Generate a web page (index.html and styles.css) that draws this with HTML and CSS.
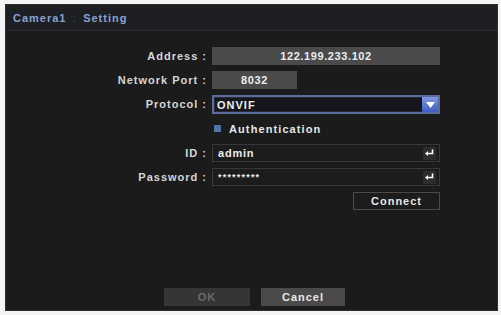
FILE: index.html
```html
<!DOCTYPE html>
<html lang="en">
<head>
    <meta charset="UTF-8">
    <title>Camera1 Setting</title>
    <link rel="stylesheet" href="styles.css">
</head>
<body>
<div class="window">
    <div class="titlebar">
        <span>Camera1</span>
        <span class="sep">:</span>
        <span>Setting</span>
    </div>

    <form class="setting-form">
        <label>Address :</label>
        <div class="field filled center">122.199.233.102</div>

        <label>Network Port :</label>
        <div class="field filled center short">8032</div>

        <label>Protocol :</label>
        <div class="field select">
            <span>ONVIF</span>
            <span class="drop">
                <svg width="9" height="6" viewBox="0 0 9 6"><path d="M0 0 H9 L4.5 6 Z" fill="#fff"/></svg>
            </span>
        </div>

        <div></div>
        <div class="check-row">
            <span class="check"></span>
            <span>Authentication</span>
        </div>

        <label>ID :</label>
        <div class="field text">
            <span>admin</span>
            <span class="enter">
                <svg width="9" height="8" viewBox="0 0 9 8"><path d="M7.5 0.5 V4.5 H2" stroke="#fff" stroke-width="1.6" fill="none"/><path d="M0 4.5 L3 2 V7 Z" fill="#fff"/></svg>
            </span>
        </div>

        <label>Password :</label>
        <div class="field text">
            <span class="stars">*********</span>
            <span class="enter">
                <svg width="9" height="8" viewBox="0 0 9 8"><path d="M7.5 0.5 V4.5 H2" stroke="#fff" stroke-width="1.6" fill="none"/><path d="M0 4.5 L3 2 V7 Z" fill="#fff"/></svg>
            </span>
        </div>

        <div></div>
        <div class="connect-row">
            <button type="button" class="btn-connect">Connect</button>
        </div>
    </form>

    <div class="footer">
        <button type="button" class="btn ok">OK</button>
        <button type="button" class="btn cancel">Cancel</button>
    </div>
</div>
</body>
</html>
```

FILE: styles.css
```css
body {
    margin: 0;
    background: #f4f4f4;
    font-family: "Liberation Sans", Arial, sans-serif;
    font-weight: bold;
    font-size: 11px
}

.window {
    margin: 4px 3px 0 5px;
    height: 305px;
    background: #1b1b1b;
    border: 1px solid #2e2e2e;
    display: flex;
    flex-direction: column
}

.titlebar {
    height: 25px;
    background: #1e1f23;
    border-bottom: 1px solid #2b2b2b;
    padding-left: 7px;
    display: flex;
    align-items: center;
    gap: 6px;
    color: #86a2d2;
    letter-spacing: 1px
}

.titlebar .sep {
    color: #33343c
}

.setting-form {
    display: grid;
    grid-template-columns: 201px 228px;
    grid-template-rows: 18px 18px 18px 19px 18px 18px 18px;
    column-gap: 5px;
    row-gap: 6px;
    padding-top: 16px
}

label {
    text-align: right;
    color: #d6d6d6;
    line-height: 18px;
    letter-spacing: 1px
}

.field {
    box-sizing: border-box;
    height: 18px;
    color: #ececec;
    display: flex;
    align-items: center;
    letter-spacing: 0.6px
}

.filled {
    background: #4a4a4a
}

.center {
    justify-content: center
}

.short {
    width: 85px
}

.select {
    background: #15161c;
    border: 2px solid #5b6b9c;
    box-shadow: inset 0 0 0 1px #262a3a;
    padding-left: 3px;
    justify-content: space-between;
    height: 19px;
    letter-spacing: 1px
}

.drop {
    width: 16px;
    height: 15px;
    background: linear-gradient(#7f98e0, #3e5cc4);
    display: flex;
    align-items: center;
    justify-content: center
}

.check-row {
    display: flex;
    align-items: center;
    gap: 8px;
    padding-left: 2px;
    color: #e6e6e6;
    letter-spacing: 1.1px
}

.check {
    width: 7px;
    height: 7px;
    background: #4f72a8
}

.text {
    background: #1c1c1c;
    border: 1px solid #383838;
    padding-left: 5px;
    padding-right: 3px;
    justify-content: space-between;
    letter-spacing: 0.8px
}

.stars {
    font-size: 9px;
    letter-spacing: 1.2px
}

.enter {
    width: 13px;
    height: 13px;
    background: #2c2c2c;
    display: flex;
    align-items: center;
    justify-content: center
}

.connect-row {
    display: flex;
    justify-content: flex-end
}

.btn-connect {
    width: 87px;
    height: 18px;
    background: #1c1c1c;
    border: 1px solid #4a4a4a;
    color: #e6e6e6;
    font: inherit;
    letter-spacing: 1px;
    padding: 0
}

.footer {
    margin-top: auto;
    display: flex;
    justify-content: center;
    gap: 11px;
    padding: 0 0 4px 6px
}

.btn {
    height: 18px;
    border: none;
    font: inherit;
    letter-spacing: 1px;
    padding: 0
}

.ok {
    width: 86px;
    background: #353535;
    color: #6a6a6a
}

.cancel {
    width: 84px;
    background: #4a4a4a;
    color: #e8e8e8
}
```
